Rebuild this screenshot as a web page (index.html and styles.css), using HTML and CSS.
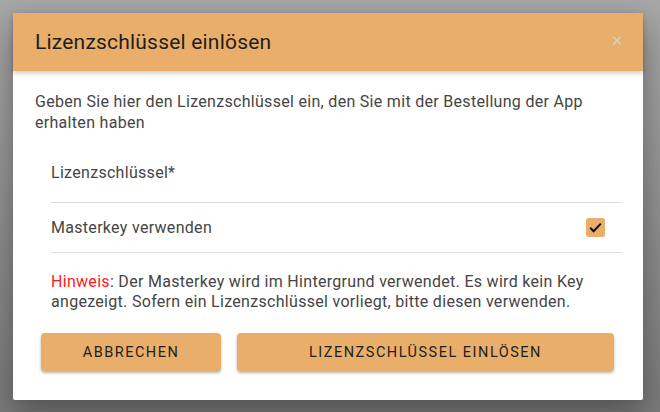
FILE: index.html
```html
<!DOCTYPE html>
<html lang="de">
<head>
<meta charset="utf-8">
<link rel="stylesheet" href="styles.css">
</head>
<body>
<div class="backdrop">
  <div class="dialog">
    <div class="header">
      <h1 class="title">Lizenzschlüssel einlösen</h1>
      <span class="close">✕</span>
    </div>
    <div class="content">
      <p class="intro">Geben Sie hier den Lizenzschlüssel ein, den Sie mit der Bestellung der App erhalten haben</p>
      <div class="form">
        <div class="field">
          <span class="label">Lizenzschlüssel*</span>
        </div>
        <div class="row">
          <span class="label">Masterkey verwenden</span>
          <span class="checkbox">
            <svg width="13" height="11" viewBox="0 0 13 11"><path d="M1.2 5.8 L4.6 9.2 L11.8 1.6" fill="none" stroke="#111" stroke-width="2"/></svg>
          </span>
        </div>
        <p class="hint"><span class="hint-label">Hinweis</span>: Der Masterkey wird im Hintergrund verwendet. Es wird kein Key angezeigt. Sofern ein Lizenzschlüssel vorliegt, bitte diesen verwenden.</p>
      </div>
      <div class="actions">
        <button class="btn btn-cancel">Abbrechen</button>
        <button class="btn btn-redeem">Lizenzschlüssel einlösen</button>
      </div>
    </div>
  </div>
</div>
</body>
</html>
```
FILE: styles.css
```css
html, body {
  margin: 0;
  padding: 0;
  height: 100%;
}
body {
  font-family: Roboto, "Liberation Sans", sans-serif;
  background: linear-gradient(#a7a7a7, #7a7a7a);
  overflow: hidden;
}
.backdrop {
  padding: 13px 17px 0 13px;
}
.dialog {
  width: 630px;
  height: 387px;
  background: #fff;
  border-radius: 2px;
  box-shadow: 0 12px 30px rgba(0,0,0,0.35);
  display: flex;
  flex-direction: column;
}
.header {
  height: 58px;
  background: #e8ae6a;
  display: flex;
  align-items: center;
  justify-content: space-between;
  padding: 0 19px 0 22px;
  box-shadow: 0 2px 5px rgba(0,0,0,0.22);
  position: relative;
}
.title {
  margin: 0;
  font-size: 21px;
  letter-spacing: 0.2px;
  font-weight: 400;
  color: #1e1e1e;
}
.close {
  color: #cfcfcf;
  font-size: 15px;
  margin-top: -2px;
}
.content {
  padding: 20px 29px 0 22px;
}
.intro {
  margin: 0;
  font-size: 16px;
  letter-spacing: 0.3px;
  line-height: 21px;
  color: #454545;
}
.form {
  padding-left: 16px;
}
.field {
  height: 70px;
  border-bottom: 1px solid #ddd;
  display: flex;
  align-items: flex-end;
  padding-bottom: 20px;
  box-sizing: border-box;
  margin-right: -8px;
}
.row {
  height: 50px;
  border-bottom: 1px solid #ddd;
  display: flex;
  align-items: center;
  justify-content: space-between;
  box-sizing: border-box;
  margin-right: -8px;
  padding-right: 17px;
}
.label {
  font-size: 16px;
  letter-spacing: 0.3px;
  color: #454545;
}
.checkbox {
  width: 19px;
  height: 19px;
  border-radius: 3px;
  background: #e8ae6a;
  display: flex;
  align-items: center;
  justify-content: center;
}
.hint {
  margin: 19px 0 0;
  font-size: 16px;
  letter-spacing: 0.3px;
  line-height: 20px;
  color: #454545;
}
.hint-label {
  color: #ff1a1a;
}
.actions {
  display: flex;
  gap: 16px;
  margin-top: 21px;
  padding-left: 6px;
}
.btn {
  height: 38px;
  border: none;
  border-radius: 4px;
  background: #e8ae6a;
  color: #1e1e1e;
  font-family: Roboto, "Liberation Sans", sans-serif;
  font-size: 14.5px;
  letter-spacing: 1.5px;
  text-transform: uppercase;
  box-shadow: 0 2px 3px rgba(0,0,0,0.3);
  padding: 0;
}
.btn-cancel {
  width: 180px;
}
.btn-redeem {
  width: 377px;
}
```
